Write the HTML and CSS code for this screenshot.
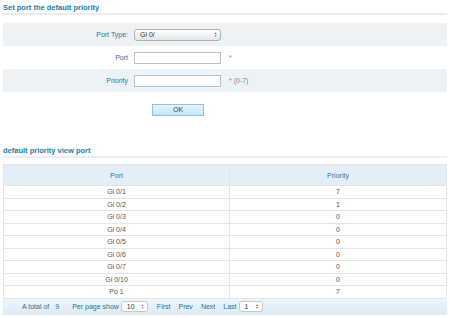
FILE: index.html
```html
<!DOCTYPE html>
<html>
<head>
  <meta charset="UTF-8">
  <link rel="stylesheet" href="styles.css">
</head>
<body>
<div id="page">
  <div class="title">Set port the default priority</div>

  <table class="form_table">
    <tr class="shade">
      <td class="label">Port Type:</td>
      <td class="field">
        <div class="select wide"><span>Gi 0/</span><span class="arrows">&#9650;<br>&#9660;</span></div>
      </td>
    </tr>
    <tr>
      <td class="label">Port</td>
      <td class="field"><input type="text" class="text_input" /><span class="hint">*</span></td>
    </tr>
    <tr class="shade">
      <td class="label">Priority</td>
      <td class="field"><input type="text" class="text_input" /><span class="hint">* (0-7)</span></td>
    </tr>
  </table>

  <div class="buttons">
    <div class="btn">OK</div>
  </div>

  <div class="title second">default priority view port</div>

  <table class="data_table">
    <thead>
      <tr><th>Port</th><th>Priority</th></tr>
    </thead>
    <tbody>
      <tr><td>Gi 0/1</td><td>7</td></tr>
      <tr><td>Gi 0/2</td><td>1</td></tr>
      <tr><td>Gi 0/3</td><td>0</td></tr>
      <tr><td>Gi 0/4</td><td>0</td></tr>
      <tr><td>Gi 0/5</td><td>0</td></tr>
      <tr><td>Gi 0/6</td><td>0</td></tr>
      <tr><td>Gi 0/7</td><td>0</td></tr>
      <tr><td>Gi 0/10</td><td>0</td></tr>
      <tr><td>Po 1</td><td>7</td></tr>
    </tbody>
  </table>

  <div class="pager">
    <span class="total">A total of</span>
    <span class="num">9</span>
    <span class="per">Per page show</span>
    <div class="select small"><span>10</span><span class="arrows">&#9650;<br>&#9660;</span></div>
    <span class="link first">First</span>
    <span class="link">Prev</span>
    <span class="link">Next</span>
    <span class="last">Last</span>
    <div class="select tiny"><span>1</span><span class="arrows">&#9650;<br>&#9660;</span></div>
  </div>
</div>
</body>
</html>
```

FILE: styles.css
```css
* {
    box-sizing: border-box;
    margin: 0;
    padding: 0;
}

body {
    background: #ffffff;
    font-family: "Liberation Sans", Arial, sans-serif;
    font-size: 7px;
    color: #555555;
}

#page {
    padding: 3px 3px 0 3px;
}

.title {
    color: #1d7ca6;
    font-weight: bold;
    font-size: 7.5px;
    height: 12px;
    border-bottom: 2px solid #e8eef4;
    margin-bottom: 8px;
}

.title.second {
    margin-top: 30px;
    margin-bottom: 6px;
}

.form_table {
    width: 100%;
    border-collapse: collapse;
}

.form_table td {
    height: 23px;
    padding: 0;
    vertical-align: middle;
}

.form_table tr.shade td {
    background: #edf2f7;
}

.form_table .label {
    width: 131px;
    text-align: right;
    color: #2f74a0;
    padding-right: 6px;
}

.text_input {
    width: 87px;
    height: 12px;
    border: 1px solid #b9c2cb;
    background: #fff;
    vertical-align: middle;
}

.hint {
    color: #888888;
    margin-left: 8px;
    vertical-align: middle;
}

.select {
    display: inline-flex;
    align-items: center;
    justify-content: space-between;
    height: 12px;
    border: 1px solid #a9b0b7;
    border-radius: 3px;
    background: linear-gradient(#ffffff, #e6e6e6);
    color: #333;
    padding: 0 3px 0 5px;
    vertical-align: middle;
}

.select.wide {
    width: 87px;
}

.select.small,
.select.tiny {
    width: 27px;
    height: 11px;
    background: #fff;
    border-color: #c3c9cf;
    margin-left: 2px;
}

.select.tiny {
    width: 24px;
}

.arrows {
    font-size: 3px;
    line-height: 3px;
    color: #666;
}

.buttons {
    padding: 12px 0 0 149px;
}

.btn {
    width: 52px;
    height: 12px;
    line-height: 10px;
    text-align: center;
    border: 1px solid #86c6e6;
    background: linear-gradient(#e4f3fb, #c7e6f6);
    color: #444;
}

.data_table {
    width: 100%;
    border-collapse: collapse;
    border: 1px solid #e2e4e6;
}

.data_table th {
    height: 21px;
    padding: 0;
    background: #e3eef8;
    color: #2679a5;
    font-weight: normal;
    border: 1px solid #e2e4e6;
}

.data_table td {
    height: 12.5px;
    padding: 0;
    text-align: center;
    border: 1px solid #e3e5e7;
    color: #555;
}

.data_table th:first-child,
.data_table td:first-child {
    width: 226px;
}

.pager {
    display: flex;
    align-items: center;
    height: 16px;
    padding-left: 19px;
    background: linear-gradient(#edf5fb, #dcebf6);
    color: #2a6f9a;
    box-shadow: 0 1px 1px #e6e6e6;
}

.pager .num {
    margin-left: 6px;
}

.pager .per {
    margin-left: 13px;
}

.pager .first {
    margin-left: 9px;
}

.pager .link {
    margin-right: 8px;
}

.pager .select span {
    margin: 0;
}
```
